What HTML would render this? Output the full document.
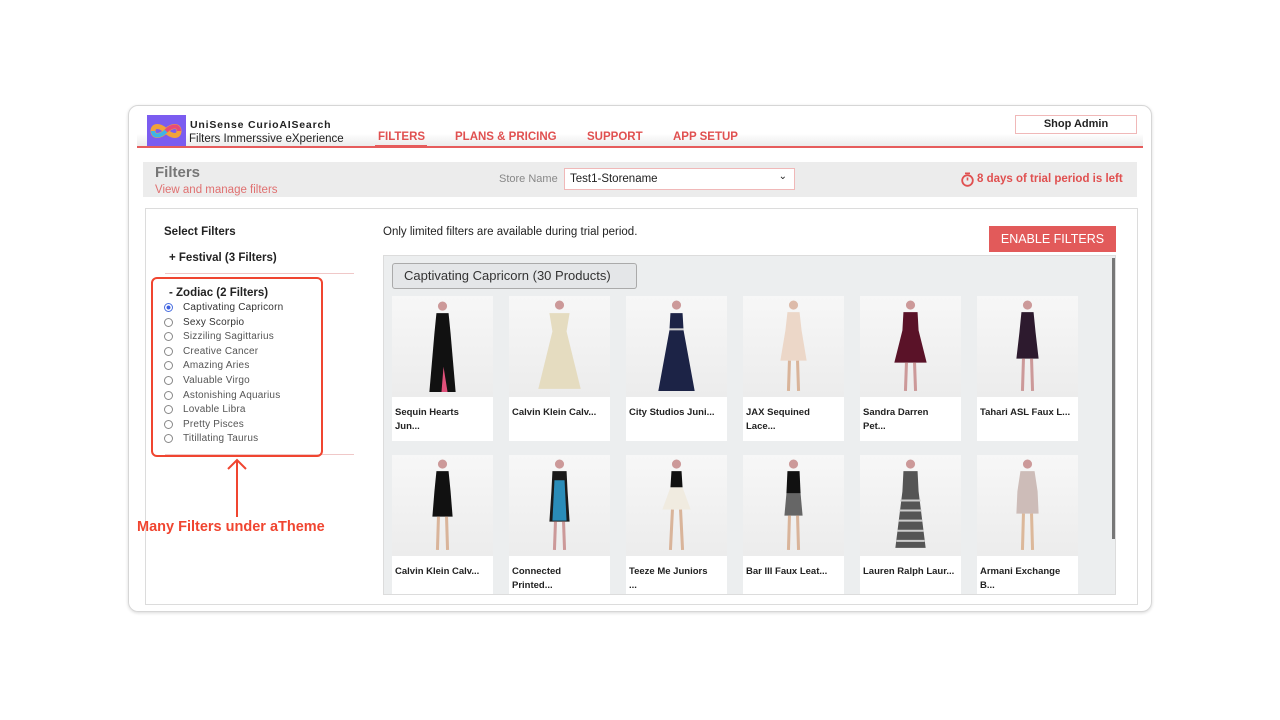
<!DOCTYPE html>
<html><head><meta charset="utf-8">
<style>
*{margin:0;padding:0;box-sizing:border-box}
body{width:1280px;height:720px;background:#fff;font-family:"Liberation Sans",Arial,sans-serif;position:relative;overflow:hidden}
.a{position:absolute}
.card{position:absolute;width:101px;background:#fff}
.card svg{display:block;width:101px;height:101px;background:linear-gradient(#f7f7f7,#ececec)}
.card .t{font-size:9.5px;font-weight:bold;color:#222;padding:9px 3px 0;line-height:14px;height:44px}
.opt{position:absolute;left:164px;font-size:10px;color:#555;display:flex;align-items:center;letter-spacing:.2px}
.opt i{display:inline-block;width:9px;height:9px;border:1px solid #888;border-radius:50%;margin-right:10px;background:#fff}
.nav{position:absolute;top:131px;font-size:11.5px;font-weight:bold;color:#e05050}
</style></head><body>
<div class="a" style="left:128px;top:105px;width:1024px;height:507px;border:1px solid #d6d6d6;border-radius:10px;box-shadow:0 1px 3px rgba(0,0,0,.15)"></div>
<div class="a" style="left:137px;top:112px;width:1006px;height:36px;background:linear-gradient(#fff 60%,#e8e8e8)"></div>
<div class="a" style="left:137px;top:146px;width:1006px;height:2px;background:#e65c5c"></div>
<svg class="a" style="left:147px;top:115px" width="39" height="31" viewBox="0 0 39 31"><rect width="39" height="31" fill="#7b5cf0"/><path d="M6 16c0-6 7-6 13 0s13 6 13 0-7-6-13 0-13 6-13 0z" fill="none" stroke="#f2a23a" stroke-width="5"/><path d="M6 16c0 6 7 6 13 0" fill="none" stroke="#3bb4e8" stroke-width="4"/><path d="M19 16c6-6 13-6 13 0" fill="none" stroke="#e84a7a" stroke-width="4"/></svg>
<div class="a" style="left:190px;top:119px;font-size:10.5px;font-weight:bold;color:#222;letter-spacing:.8px">UniSense CurioAISearch</div>
<div class="a" style="left:189px;top:133px;font-size:11.5px;color:#222">Filters Immerssive eXperience</div>
<div class="nav" style="left:378px">FILTERS</div>
<div class="a" style="left:375px;top:145px;width:52px;height:3px;background:#e65c5c"></div>
<div class="nav" style="left:455px">PLANS &amp; PRICING</div>
<div class="nav" style="left:587px">SUPPORT</div>
<div class="nav" style="left:673px">APP SETUP</div>
<div class="a" style="left:1015px;top:115px;width:122px;height:19px;border:1px solid #f0b8b8;background:#fff;font-size:11px;font-weight:bold;text-align:center;line-height:17px;color:#222">Shop Admin</div>
<div class="a" style="left:143px;top:162px;width:994px;height:35px;background:#ececec"></div>
<div class="a" style="left:155px;top:164px;font-size:15px;color:#777;font-weight:bold">Filters</div>
<div class="a" style="left:155px;top:184px;font-size:11.5px;color:#e07070">View and manage filters</div>
<div class="a" style="left:499px;top:173px;font-size:11px;color:#888">Store Name</div>
<div class="a" style="left:564px;top:168px;width:231px;height:22px;border:1px solid #f0b8b8;background:#fff;font-size:11.5px;color:#222;padding:4px 5px">Test1-Storename<span style="position:absolute;right:7px;top:2px;font-size:10px">⌄</span></div>
<svg class="a" style="left:960px;top:172px" width="15" height="15" viewBox="0 0 15 15"><circle cx="7.5" cy="8.5" r="5.3" fill="none" stroke="#e05050" stroke-width="1.8"/><rect x="5" y="0.5" width="5" height="1.6" fill="#e05050"/><path d="M7.5 8.5V5.5" stroke="#e05050" stroke-width="1.6"/></svg>
<div class="a" style="left:977px;top:173px;font-size:11.5px;font-weight:bold;color:#e05050">8 days of trial period is left</div>
<div class="a" style="left:145px;top:208px;width:993px;height:397px;border:1px solid #dcdcdc"></div>
<div class="a" style="left:164px;top:226px;font-size:11.5px;font-weight:bold;color:#222">Select Filters</div>
<div class="a" style="left:169px;top:252px;font-size:11.5px;font-weight:bold;color:#222">+ Festival (3 Filters)</div>
<div class="a" style="left:165px;top:273px;width:189px;height:1px;background:#f0c8c8"></div>
<div class="a" style="left:165px;top:454px;width:189px;height:1px;background:#f0c8c8"></div>
<div class="a" style="left:151px;top:277px;width:172px;height:180px;border:2.5px solid #f04530;border-radius:6px"></div>
<div class="a" style="left:169px;top:287px;font-size:11.5px;font-weight:bold;color:#222">- Zodiac (2 Filters)</div>
<div class="opt" style="top:302px;color:#333"><i style="border-color:#4a6fe0;background:radial-gradient(#3d5fe0 35%,#fff 45%)"></i>Captivating Capricorn</div>
<div class="opt" style="top:317px;color:#333"><i></i>Sexy Scorpio</div>
<div class="opt" style="top:331px"><i></i>Sizziling Sagittarius</div>
<div class="opt" style="top:346px"><i></i>Creative Cancer</div>
<div class="opt" style="top:360px"><i></i>Amazing Aries</div>
<div class="opt" style="top:375px"><i></i>Valuable Virgo</div>
<div class="opt" style="top:390px"><i></i>Astonishing Aquarius</div>
<div class="opt" style="top:404px"><i></i>Lovable Libra</div>
<div class="opt" style="top:419px"><i></i>Pretty Pisces</div>
<div class="opt" style="top:433px"><i></i>Titillating Taurus</div>
<svg class="a" style="left:226px;top:458px" width="22" height="60" viewBox="0 0 22 60"><path d="M11 59V2M2 11L11 2L20 11" fill="none" stroke="#f04530" stroke-width="2"/></svg>
<div class="a" style="left:137px;top:519px;font-size:14.5px;font-weight:bold;color:#f04530">Many Filters under aTheme</div>
<div class="a" style="left:383px;top:226px;font-size:11.5px;color:#222">Only limited filters are available during trial period.</div>
<div class="a" style="left:989px;top:226px;width:127px;height:26px;background:#e25a5a;color:#fff;font-size:12.5px;text-align:center;line-height:26px">ENABLE FILTERS</div>
<div class="a" style="left:383px;top:255px;width:733px;height:340px;background:#eceeef;border:1px solid #dcdcdc;overflow:hidden">
<div class="a" style="left:728px;top:2px;width:3px;height:281px;background:#777"></div>
<div class="a" style="left:8px;top:7px;width:245px;height:26px;border:1px solid #aaa;border-radius:3px;background:#e4e6e8;font-size:13px;color:#333;line-height:24px;padding-left:11px">Captivating Capricorn (30 Products)</div>

<div class="card" style="left:8px;top:40px"><svg viewBox="0 0 100 100"><circle cx="50" cy="10" r="4.5" fill="#c99"/><path d="M44 17h12l2 20 5 58H37l5-58z" fill="#111"/><path d="M51 70l4 25h-6z" fill="#e0507a"/></svg><div class="t">Sequin Hearts<br>Jun...</div></div>
<div class="card" style="left:125px;top:40px"><svg viewBox="0 0 100 100"><circle cx="50" cy="9" r="4.5" fill="#c99"/><path d="M40 17h20l-3 18 14 57H29l14-57z" fill="#e5dcc0"/></svg><div class="t">Calvin Klein Calv...</div></div>
<div class="card" style="left:242px;top:40px"><svg viewBox="0 0 100 100"><circle cx="50" cy="9" r="4.5" fill="#c99"/><path d="M44 17h12l1 17 11 60H32l11-60z" fill="#1c2346"/><rect x="43" y="32" width="14" height="2" fill="#ccc"/></svg><div class="t">City Studios Juni...</div></div>
<div class="card" style="left:359px;top:40px"><svg viewBox="0 0 100 100"><circle cx="50" cy="9" r="4.5" fill="#dba"/><path d="M44 16h12l2 18 5 30H37l5-30z" fill="#ecd7c8"/><path d="M46 64l-1 30M54 64l1 30" stroke="#d9b49a" stroke-width="3"/></svg><div class="t">JAX Sequined<br>Lace...</div></div>
<div class="card" style="left:476px;top:40px"><svg viewBox="0 0 100 100"><circle cx="50" cy="9" r="4.5" fill="#c99"/><path d="M43 16h14l1 18 8 32H34l8-32z" fill="#5a1228"/><path d="M46 66l-1 28M54 66l1 28" stroke="#c99" stroke-width="3"/></svg><div class="t">Sandra Darren<br>Pet...</div></div>
<div class="card" style="left:593px;top:40px"><svg viewBox="0 0 100 100"><circle cx="50" cy="9" r="4.5" fill="#c99"/><path d="M44 16h12l2 20 3 26H39l3-26z" fill="#2d1a2e"/><path d="M46 62l-1 32M54 62l1 32" stroke="#c99" stroke-width="3"/></svg><div class="t">Tahari ASL Faux L...</div></div>

<div class="card" style="left:8px;top:199px"><svg viewBox="0 0 100 100"><circle cx="50" cy="9" r="4.5" fill="#c99"/><path d="M44 16h12l2 20 2 25H40l2-25z" fill="#111"/><path d="M46 61l-1 33M54 61l1 33" stroke="#d9b49a" stroke-width="3"/></svg><div class="t">Calvin Klein Calv...</div></div>
<div class="card" style="left:125px;top:199px"><svg viewBox="0 0 100 100"><circle cx="50" cy="9" r="4.5" fill="#c99"/><path d="M43 16h14l1 20 2 30H40l2-30z" fill="#1b1b1b"/><path d="M45 25h10l2 40H43z" fill="#2a8cb8"/><path d="M46 66l-1 28M54 66l1 28" stroke="#c99" stroke-width="3"/></svg><div class="t">Connected<br>Printed...</div></div>
<div class="card" style="left:242px;top:199px"><svg viewBox="0 0 100 100"><circle cx="50" cy="9" r="4.5" fill="#c99"/><path d="M45 16h10l1 16H44z" fill="#111"/><path d="M44 32h12l8 22H36z" fill="#f0ebe0"/><path d="M46 54l-2 40M54 54l2 40" stroke="#d9b49a" stroke-width="3"/></svg><div class="t">Teeze Me Juniors<br>...</div></div>
<div class="card" style="left:359px;top:199px"><svg viewBox="0 0 100 100"><circle cx="50" cy="9" r="4.5" fill="#c99"/><path d="M44 16h12l1 22H43z" fill="#111"/><path d="M43 38h14l2 22H41z" fill="#666"/><path d="M46 60l-1 34M54 60l1 34" stroke="#d9b49a" stroke-width="3"/></svg><div class="t">Bar III Faux Leat...</div></div>
<div class="card" style="left:476px;top:199px"><svg viewBox="0 0 100 100"><circle cx="50" cy="9" r="4.5" fill="#c99"/><path d="M43 16h14l1 20 7 56H35l7-56z" fill="#555"/><path d="M40 45h20M39 55h22M38 65h24M37 75h26M36 85h28" stroke="#ccc" stroke-width="2"/></svg><div class="t">Lauren Ralph Laur...</div></div>
<div class="card" style="left:593px;top:199px"><svg viewBox="0 0 100 100"><circle cx="50" cy="9" r="4.5" fill="#c99"/><path d="M43 16h14l3 20 1 22H39l1-22z" fill="#cdbcb8"/><path d="M46 58l-1 36M54 58l1 36" stroke="#dcb89a" stroke-width="3"/></svg><div class="t">Armani Exchange<br>B...</div></div>
</div>
</body></html>
